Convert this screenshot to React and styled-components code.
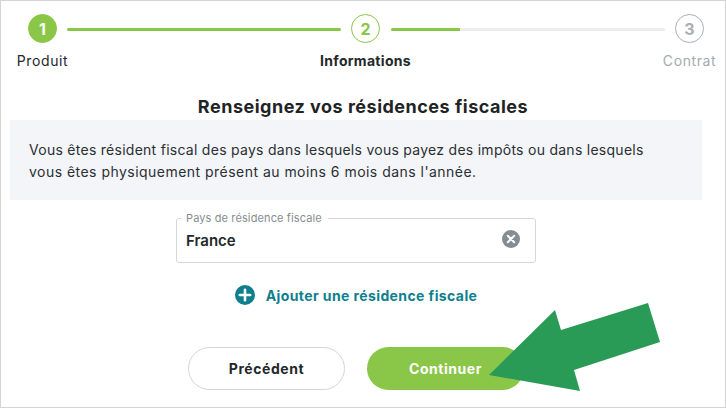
import React from 'react';
import styled, { createGlobalStyle } from 'styled-components';

const GlobalStyle = createGlobalStyle`
  html, body {
    margin: 0;
    padding: 0;
    background: #fff;
    font-family: Inter, "Liberation Sans", sans-serif;
  }
  * {
    box-sizing: border-box;
  }
`;

const Page = styled.div`
  position: relative;
  width: 726px;
  height: 408px;
  border: 1px solid #d4d4d4;
  background: #fff;
  overflow: hidden;
`;

const Stepper = styled.div`
  display: flex;
  padding: 13px 0 0 27px;
`;

const Step = styled.div`
  display: flex;
  flex-direction: column;
  align-items: center;
  width: 29px;
  flex: none;
`;

const Bubble = styled.div`
  display: flex;
  align-items: center;
  justify-content: center;
  width: 29px;
  height: 29px;
  border-radius: 50%;
  font-size: 16px;
  font-weight: 700;
  border: 1px solid ${({ $state }) => ($state === 'todo' ? '#a9b0b4' : '#8ac647')};
  background: ${({ $state }) => ($state === 'done' ? '#8ac647' : '#fff')};
  color: ${({ $state }) => {
    if ($state === 'done') return '#fff';
    return $state === 'current' ? '#8ac647' : '#a9b0b4';
  }};
`;

const StepLabel = styled.div`
  margin-top: 9px;
  font-size: 14px;
  line-height: 18px;
  white-space: nowrap;
  letter-spacing: ${({ $state }) => ($state === 'current' ? '0.3px' : '0.6px')};
  font-weight: ${({ $state }) => ($state === 'current' ? 700 : 400)};
  color: ${({ $state }) => ($state === 'todo' ? '#a3abaf' : '#23282b')};
`;

const Track = styled.div`
  flex: none;
  width: 274px;
  height: 3px;
  margin: 13.5px 10px 0 ${({ $second }) => ($second ? '11px' : '10px')};
  border-radius: 2px;
  background: #ececec;
  overflow: hidden;
`;

const Fill = styled.div`
  height: 100%;
  background: #8ac647;
`;

const Title = styled.h1`
  margin: 26px 0 0;
  font-size: 18px;
  line-height: 22px;
  font-weight: 700;
  letter-spacing: 0.5px;
  text-align: center;
  color: #1f2426;
`;

const Notice = styled.div`
  margin: 2px 23px 0 9px;
  height: 80px;
  padding: 19px 19px 0;
  background: #f4f5f9;
  font-size: 14px;
  line-height: 22px;
  white-space: nowrap;
  color: #2a2f32;
`;

const NoticeLine = styled.div`
  letter-spacing: ${({ $spacing }) => $spacing};
`;

const FieldWrap = styled.div`
  position: relative;
  width: 360px;
  height: 45px;
  margin: 18px 0 0 175px;
  display: flex;
  align-items: center;
  justify-content: space-between;
  padding: 0 15px 0 9px;
  border: 1px solid #d5d7d9;
  border-radius: 3px;
`;

const FieldLegend = styled.span`
  position: absolute;
  top: -7px;
  left: 4px;
  padding: 0 6px 0 5px;
  background: #fff;
  font-size: 11px;
  line-height: 13px;
  letter-spacing: 0.12px;
  color: #858d91;
`;

const FieldValue = styled.span`
  font-size: 15px;
  font-weight: 600;
  color: #23282b;
`;

const ClearButton = styled.svg`
  width: 18px;
  height: 18px;
  flex: none;
  margin-top: -3px;
`;

const AddRow = styled.div`
  display: flex;
  align-items: center;
  justify-content: center;
  gap: 11px;
  margin: 22px 14px 0 0;
  color: #0e7f8e;
  font-size: 14px;
  font-weight: 700;
  letter-spacing: 0.4px;
  height: 20px;
`;

const Actions = styled.div`
  display: flex;
  gap: 22px;
  margin: 42px 0 0 187px;
`;

const Button = styled.button`
  width: 157px;
  height: 43px;
  border-radius: 22px;
  font: 700 14px Inter, "Liberation Sans", sans-serif;
  letter-spacing: 0.55px;
  border: ${({ $primary }) => ($primary ? 'none' : '1px solid #d3d5d6')};
  background: ${({ $primary }) => ($primary ? '#8ac647' : '#fff')};
  color: ${({ $primary }) => ($primary ? '#fff' : '#23282b')};
`;

const Arrow = styled.svg`
  position: absolute;
  left: -1px;
  top: -1px;
  width: 726px;
  height: 408px;
  pointer-events: none;
`;

const steps = [
  { n: 1, label: 'Produit', state: 'done' },
  { n: 2, label: 'Informations', state: 'current' },
  { n: 3, label: 'Contrat', state: 'todo' },
];

function App() {
  return (
    <Page>
      <GlobalStyle />
      <Stepper>
        {steps.map((step, i) => (
          <React.Fragment key={step.n}>
            <Step>
              <Bubble $state={step.state}>{step.n}</Bubble>
              <StepLabel $state={step.state}>{step.label}</StepLabel>
            </Step>
            {i === 0 && (
              <Track>
                <Fill style={{ width: '100%' }} />
              </Track>
            )}
            {i === 1 && (
              <Track $second>
                <Fill style={{ width: '25%' }} />
              </Track>
            )}
          </React.Fragment>
        ))}
      </Stepper>

      <Title>Renseignez vos résidences fiscales</Title>
      <Notice>
        <NoticeLine $spacing="0.27px">
          Vous êtes résident fiscal des pays dans lesquels vous payez des impôts ou dans lesquels
        </NoticeLine>
        <NoticeLine $spacing="0.47px">
          vous êtes physiquement présent au moins 6 mois dans l'année.
        </NoticeLine>
      </Notice>

      <FieldWrap>
        <FieldLegend>Pays de résidence fiscale</FieldLegend>
        <FieldValue>France</FieldValue>
        <ClearButton viewBox="0 0 18 18">
          <circle cx="9" cy="9" r="9" fill="#848e92" />
          <path d="M5.8 5.8l6.4 6.4M12.2 5.8l-6.4 6.4" stroke="#fff" strokeWidth="2" strokeLinecap="round" />
        </ClearButton>
      </FieldWrap>

      <AddRow>
        <svg width="20" height="20" viewBox="0 0 20 20">
          <circle cx="10" cy="10" r="10" fill="#0e7f8e" />
          <path d="M10 4.8v10.4M4.8 10h10.4" stroke="#fff" strokeWidth="2.6" strokeLinecap="round" />
        </svg>
        Ajouter une résidence fiscale
      </AddRow>

      <Actions>
        <Button>Précédent</Button>
        <Button $primary>Continuer</Button>
      </Actions>

      <Arrow viewBox="0 0 726 408">
        <polygon
          points="489,375 555,310 561,330 648,303 660,342 574,370 580,391"
          fill="#2a9a57"
        />
      </Arrow>
    </Page>
  );
}

export default App;
